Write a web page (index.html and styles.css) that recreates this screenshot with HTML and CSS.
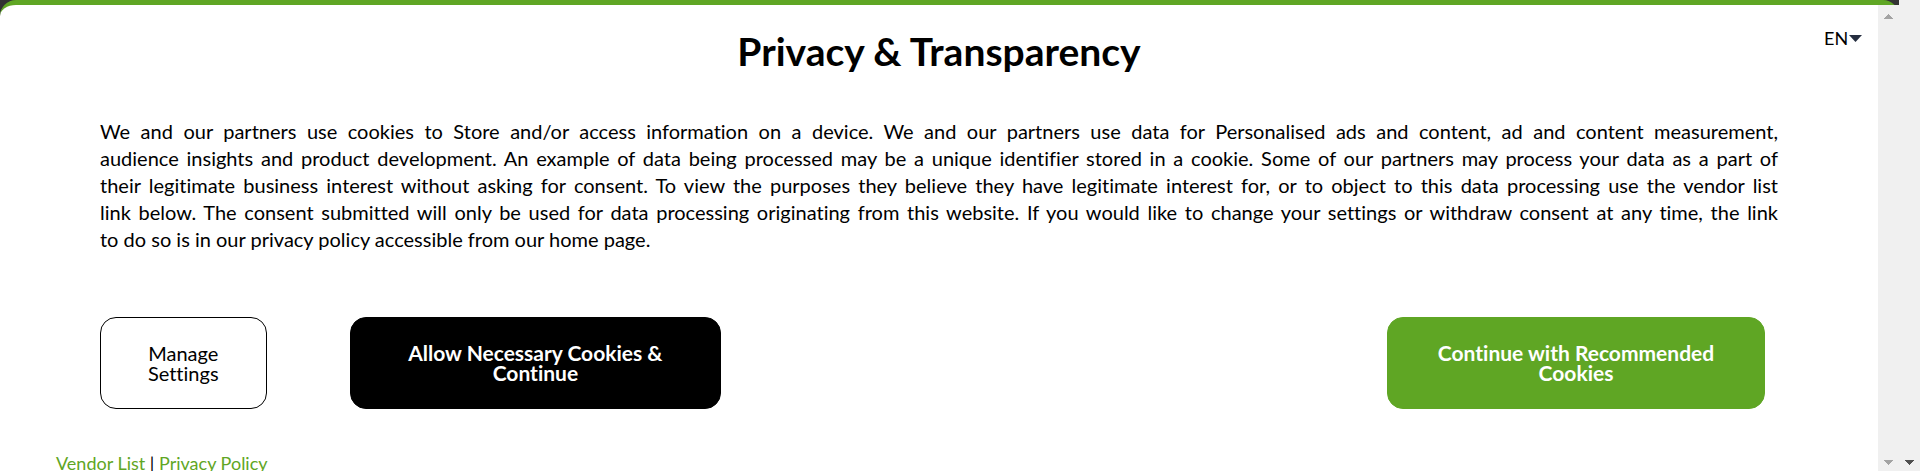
FILE: index.html
```html
<!DOCTYPE html>
<html lang="en">
<head>
<meta charset="utf-8">
<meta name="viewport" content="width=device-width, initial-scale=1">
<title>Privacy &amp; Transparency</title>
<link rel="stylesheet" href="styles.css">
</head>
<body>
<div class="page">
  <div class="backdrop">
    <section class="banner">
      <div class="panel">
        <header class="header">
          <h1 class="title">Privacy &amp; Transparency</h1>
          <label class="language">
            <select class="language-select" aria-label="Language">
              <option>EN</option>
            </select>
            <svg class="language-arrow" viewBox="0 0 13 7" aria-hidden="true"><path d="M0 0h13L6.500 7z"/></svg>
          </label>
        </header>
        <p class="message">
          <span class="line">We and our partners use cookies to Store and/or access information on a device. We and our partners use data for Personalised ads and content, ad and content measurement,</span>
          <span class="line">audience insights and product development. An example of data being processed may be a unique identifier stored in a cookie. Some of our partners may process your data as a part of</span>
          <span class="line">their legitimate business interest without asking for consent. To view the purposes they believe they have legitimate interest for, or to object to this data processing use the vendor list</span>
          <span class="line">link below. The consent submitted will only be used for data processing originating from this website. If you would like to change your settings or withdraw consent at any time, the link</span>
          to do so is in our privacy policy accessible from our home page.
        </p>
        <div class="actions">
          <button class="button button-manage" type="button">Manage Settings</button>
          <button class="button button-necessary" type="button">Allow Necessary Cookies &amp; Continue</button>
          <button class="button button-accept" type="button">Continue with Recommended Cookies</button>
        </div>
        <footer class="links">
          <a href="#vendors">Vendor List</a> | <a href="#privacy">Privacy Policy</a>
        </footer>
      </div>
      <div class="scrollbar scrollbar-idle" aria-hidden="true">
        <svg viewBox="0 0 9 5"><path d="M4 0h1v1h1v1h1v1h1v1h1v1H0V4h1V3h1V2h1V1h1z"/></svg>
        <svg viewBox="0 0 9 5"><path d="M0 0h9v1H8v1H7v1H6v1H5v1H4V4H3V3H2V2H1V1H0z"/></svg>
      </div>
    </section>
  </div>
  <div class="scrollbar scrollbar-active" aria-hidden="true">
    <svg viewBox="0 0 9 5"><path d="M0 0h9v1H8v1H7v1H6v1H5v1H4V4H3V3H2V2H1V1H0z"/></svg>
  </div>
</div>
</body>
</html>
```

FILE: styles.css
```css
* {
  box-sizing: border-box;
}

body {
  margin: 0;
  color: #000;
  font-family: "Gill Sans", "Gill Sans MT", Lato, sans-serif;
  font-size: 20px;
  font-variant-ligatures: none;
}

.page {
  display: flex;
  height: 100vh;
  overflow: hidden;
}

.backdrop {
  flex: 1;
  min-width: 0;
  background: linear-gradient(#333 16px, #fff 16px);
}

.banner {
  display: flex;
  height: 100%;
  border-top: 5px solid #5fa624;
  border-radius: 16px 16px 0 0;
  background: #fff;
}

.panel {
  flex: 1;
  min-width: 0;
  height: 100%;
  overflow: hidden;
}

.header {
  display: grid;
  grid-template-columns: 1fr auto 1fr;
  padding: 23px 16px 0;
}

.title {
  grid-column: 2;
  margin: 0;
  font-size: 39px;
  line-height: 46px;
  font-weight: 700;
}

.language {
  display: flex;
  align-items: center;
  justify-self: end;
  height: 20px;
}

.language-select {
  appearance: none;
  padding: 0;
  border: 0;
  background: none;
  color: #000;
  font-family: inherit;
  font-size: 18px;
  line-height: 20px;
}

.language-arrow {
  width: 13px;
  height: 7px;
  fill: #252e40;
}

.message {
  margin: 44px 100px 0;
  font-size: 20px;
  line-height: 27px;
  text-align: justify;
}

.line {
  display: block;
  text-align-last: justify;
}

.actions {
  display: flex;
  align-items: center;
  gap: 5%;
  margin: 64px 113px 0 100px;
}

.button {
  padding: 25px 40px;
  border: 1px solid #000;
  border-radius: 16px;
  background: #fff;
  color: #000;
  font-family: inherit;
  font-size: 20px;
  font-variant-ligatures: none;
  line-height: 20px;
}

.button-manage {
  width: 10%;
}

.button-necessary {
  width: 22.3%;
  background: #000;
  color: #fff;
  font-size: 21px;
  font-weight: 700;
}

.button-accept {
  width: 22.7%;
  margin-left: auto;
  border-color: #5fa624;
  background: #5fa624;
  color: #fff;
  font-size: 21px;
  font-weight: 700;
}

.links {
  margin: 42px 56px 0;
  font-size: 18px;
  line-height: 24px;
}

.links a {
  color: #5fa624;
  text-decoration: none;
}

.scrollbar {
  display: flex;
  flex: none;
  flex-direction: column;
  align-items: center;
  justify-content: space-between;
  width: 21px;
  padding: 9px 0 6px;
  background: #f0f0f0;
}

.scrollbar svg {
  width: 9px;
  height: 5px;
}

.scrollbar-idle {
  fill: #a3a3a3;
}

.scrollbar-active {
  justify-content: flex-end;
  fill: #505050;
}
```
